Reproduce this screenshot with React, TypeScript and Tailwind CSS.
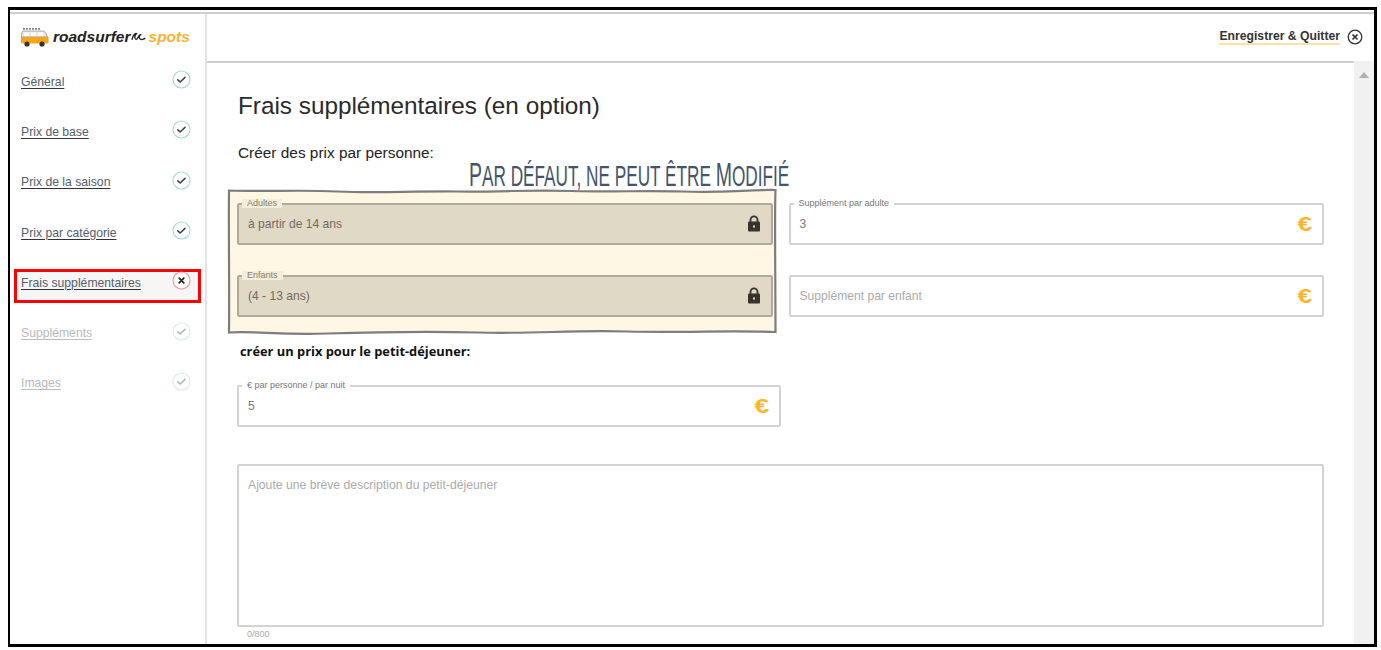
import React from "react";

const sans = "font-['Liberation_Sans',Arial,sans-serif]";

function Status({ kind = "ok", faded = false }: { kind?: "ok" | "err"; faded?: boolean }) {
  const ring = kind === "err" ? "#f29a9a" : faded ? "#d5ece7" : "#a5dbd0";
  const ink = faded ? "#b5b5b5" : "#444444";
  return (
    <svg width="19" height="19" viewBox="0 0 19 19" fill="none">
      <circle cx="9.5" cy="9.5" r="8.5" stroke={ring} strokeWidth="1.1" fill="white" />
      {kind === "ok" ? (
        <path d="M5.8 9.8 8.2 12 13 7.4" stroke={ink} strokeWidth="1.6" strokeLinecap="round" strokeLinejoin="round" />
      ) : (
        <path d="M7.2 7.2l4.600 4.600M11.800 7.200l-4.600 4.600" stroke="#222" strokeWidth="1.7" strokeLinecap="round" />
      )}
    </svg>
  );
}

function NavRow({ label, kind, faded, active }: { label: string; kind?: "ok" | "err"; faded?: boolean; active?: boolean }) {
  return (
    <div className="relative flex h-[50.3px] items-center justify-between pl-[11px] pr-[14px]">
      {active && <div className="absolute left-[4px] right-[4px] top-[12px] h-[34px] border-[3px] border-[#ff0000] bg-[#f6f6f6]" />}
      <span
        className={`relative mt-[1px] text-[12.2px] leading-[14px] underline underline-offset-2 ${
          faded ? "text-[#b9b9b9] decoration-[#bdbdbd]" : "text-[#55606a] decoration-[#333]"
        }`}
      >
        {label}
      </span>
      <span className="relative -mt-[3px]">
        <Status kind={kind} faded={faded} />
      </span>
    </div>
  );
}

function Lock() {
  return (
    <svg width="14" height="17" viewBox="0 0 14 17" fill="none">
      <path d="M3.5 7V4.8a3.5 3.5 0 0 1 7 0V7" stroke="#38332a" strokeWidth="1.8" />
      <rect x="1" y="6.5" width="12" height="10" rx="1" fill="#38332a" />
      <rect x="6" y="10.5" width="2" height="2" fill="#e0d9c5" />
    </svg>
  );
}

function Euro() {
  return <span className="mr-px scale-x-[1.25] text-[21px] font-bold leading-none text-[#fbb62c]">€</span>;
}

function Field({
  label,
  value,
  placeholder,
  locked,
  className = "",
}: {
  label?: string;
  value?: string;
  placeholder?: string;
  locked?: boolean;
  className?: string;
}) {
  return (
    <div
      className={`relative flex h-[42px] items-center justify-between rounded-[2px] border-2 pl-[9px] pr-[10px] text-[12.1px] ${
        locked ? "border-[#b1aa98] bg-[#e0d9c5] text-[#716c5f]" : "border-[#d3d3d3] bg-white text-[#777]"
      } ${className}`}
    >
      {label && (
        <span
          className={`absolute -top-[6px] left-[3px] px-[5px] text-[9px] leading-[9px] ${
            locked ? "bg-[#f4edd8] text-[#86806f]" : "bg-white text-[#777]"
          }`}
        >
          {label}
        </span>
      )}
      <span className={`mt-[2px] ${placeholder ? "text-[#aaa]" : ""}`}>{value ?? placeholder}</span>
      {locked ? <Lock /> : <Euro />}
    </div>
  );
}

export default function App() {
  return (
    <div className={`h-[650px] w-[1381px] overflow-hidden bg-white pl-[8px] pt-[7px] ${sans}`}>
      <div className="flex h-[640px] w-[1369px] flex-col overflow-hidden border-[3px] border-l-2 border-black">
        <div className="mt-[2px] h-[2px] w-full shrink-0 bg-[#cfcfcf]" />
        <div className="flex min-h-0 flex-1">
          <aside className="w-[197px] shrink-0 border-r-2 border-[#e2e2e2]">
            <div className="flex h-[41px] items-center gap-[4px] pl-[10px] pt-[4px]">
              <svg width="29" height="20" viewBox="0 0 29 20" fill="none">
                <path d="M3 4h20c2 0 3.5 3 4.5 6H1.5C1.5 7 2 4 3 4Z" fill="#e8e8e8" stroke="#777" strokeWidth=".6" />
                <path d="M1 10h27.5v5c0 1-.5 1.500-1.500 1.500H2C1 16.500 1 15.500 1 15Z" fill="#f9a51a" />
                <path d="M3 1.800h18" stroke="#555" strokeWidth="1.200" strokeDasharray="2 1" />
                <rect x="4" y="5.500" width="5" height="3.500" fill="#fff" />
                <rect x="11" y="5.500" width="5" height="3.500" fill="#fff" />
                <rect x="18" y="5.500" width="5" height="3.500" fill="#fff" />
                <circle cx="7" cy="17" r="2.600" fill="#333" />
                <circle cx="22" cy="17" r="2.600" fill="#333" />
              </svg>
              <span className="flex items-center whitespace-nowrap text-[15.5px] font-bold italic leading-none text-[#222]">
                roadsurfer
                <svg width="15" height="11" viewBox="0 0 16 12" fill="none">
                  <path d="M1 9c1-5 4-7 5-6-2 1-3 5-1 6s3-5 5-5c-1 1-2 4 0 5s3 0 5-1" stroke="#222" strokeWidth="1.500" strokeLinecap="round" />
                </svg>
                <span className="ml-[3px] text-[#fbb034]">spots</span>
              </span>
            </div>
            <nav className="mt-[1px]">
              <NavRow label="Général" />
              <NavRow label="Prix de base" />
              <NavRow label="Prix de la saison" />
              <NavRow label="Prix par catégorie" />
              <NavRow label="Frais supplémentaires" kind="err" active />
              <NavRow label="Suppléments" faded />
              <NavRow label="Images" faded />
            </nav>
          </aside>
          <div className="flex min-w-0 flex-1 flex-col">
            <header className="flex h-[47px] shrink-0 items-center justify-end pr-[11px]">
              <span className="border-b-2 border-[#fde2a4] text-[12.2px] font-bold leading-[13px] text-[#333]">
                Enregistrer &amp; Quitter
              </span>
              <svg width="16" height="16" viewBox="0 0 16 16" fill="none" className="-mt-px ml-[7px]">
                <circle cx="8" cy="8" r="6.800" stroke="#333" strokeWidth="1.300" />
                <path d="M5.500 5.500l5 5M10.500 5.500l-5 5" stroke="#333" strokeWidth="1.700" />
              </svg>
            </header>
            <div className="flex min-h-0 flex-1">
              <main className="min-w-0 flex-1 overflow-hidden border-t-2 border-[#cfcfcf] px-[30px] pt-[29px]">
                <h1 className="ml-px text-[24.3px] leading-[28px] text-[#2a2a2a]">Frais supplémentaires (en option)</h1>
                <p className="ml-px mt-[23px] text-[15.4px] leading-[20px] text-[#222]">Créer des prix par personne:</p>
                <div className="relative mt-[39.5px] grid grid-cols-2 gap-x-[16px] gap-y-[30px]">
                  <svg
                    width="551"
                    height="147"
                    viewBox="0 0 550 147"
                    fill="none"
                    className="absolute -left-[10px] -top-[15px]"
                  >
                    <path
                      d="M1.500 2.500C40 4 70 1.500 110 3.500S180 3 230 3.500 300 1.500 345 3 410 2 455 3.500 520 1.500 548 2C547 30 548 90 548 144C500 142 460 145 400 143.500S310 146 250 144.500 150 144 100 145.500 30 143 1.500 144.500C2 100 1 40 1.500 2.500Z"
                      fill="#fef7e4"
                      stroke="#7d7d7d"
                      strokeWidth="2.200"
                    />
                  </svg>
                  <span className="absolute -top-[48px] left-[232px] origin-left scale-x-[0.573] whitespace-nowrap text-[30px] leading-[38px] text-[#44546a]">
                    <span className="text-[34px]">P</span>AR DÉFAUT, NE PEUT ÊTRE <span className="text-[34px]">M</span>ODIFIÉ
                  </span>
                  <Field label="Adultes" value="à partir de 14 ans" locked />
                  <Field label="Supplément par adulte" value="3" />
                  <Field label="Enfants" value="(4 - 13 ans)" locked />
                  <Field placeholder="Supplément par enfant" />
                </div>
                <p className="ml-[3px] mt-[26px] font-['Open_Sans',sans-serif] text-[12.85px] font-bold leading-[16px] text-[#111]">
                  créer un prix pour le petit-déjeuner:
                </p>
                <Field label="€ par personne / par nuit" value="5" className="mt-[26px] w-[544px]" />
                <div className="mt-[37px] h-[163px] rounded-[2px] border-2 border-[#d3d3d3] px-[9px] pt-[12px] text-[12.2px] leading-[14px] text-[#aaa]">
                  Ajoute une brève description du petit-déjeuner
                </div>
                <p className="ml-[10px] mt-[2px] text-[9px] leading-[11px] text-[#aaa]">0/800</p>
              </main>
              <div className="flex w-[20px] shrink-0 justify-center bg-[#f1f1f1] pt-[11px]">
                <div className="h-0 w-0 border-x-[5.5px] border-b-[6px] border-x-transparent border-b-[#b0b0b0]" />
              </div>
            </div>
          </div>
        </div>
      </div>
    </div>
  );
}
